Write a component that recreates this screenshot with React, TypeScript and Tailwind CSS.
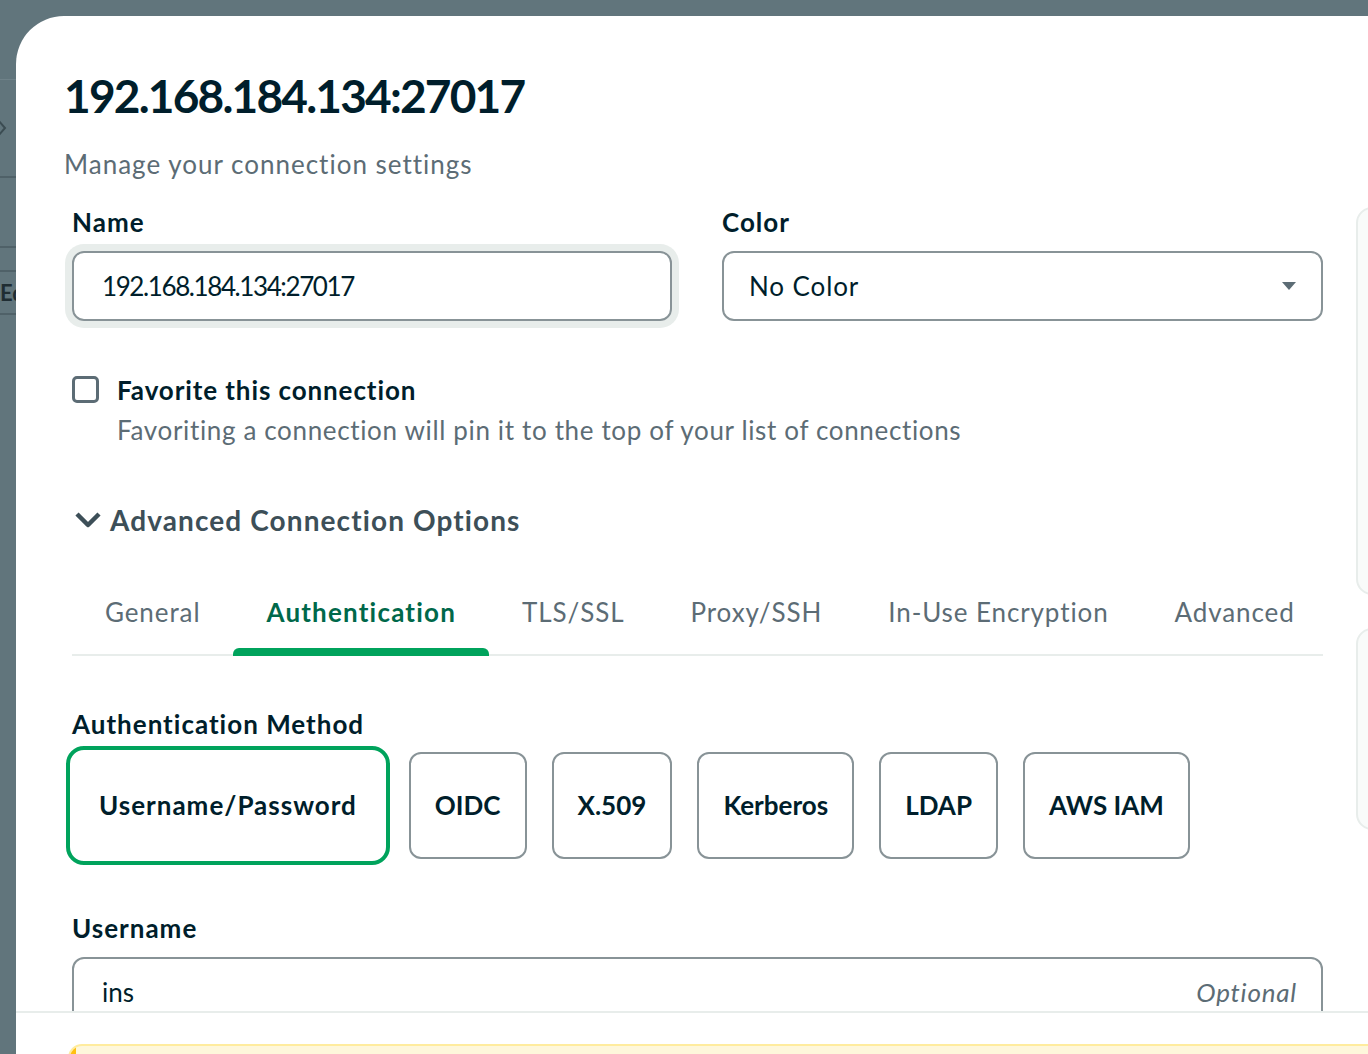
const font = { fontFamily: "Lato, 'Noto Sans', sans-serif" };

const tabs = ["General", "Authentication", "TLS/SSL", "Proxy/SSH", "In-Use Encryption", "Advanced"];
const methods = ["Username/Password", "OIDC", "X.509", "Kerberos", "LDAP", "AWS IAM"];

function LeftStrip() {
  // bits of the app behind the overlay, cut off by the modal
  return (
    <div className="w-[16px] shrink-0 flex flex-col overflow-hidden">
      <div className="h-[80px] border-b border-[#6f8289]" />
      <div className="h-[98px] border-b-2 border-[#4f6168] flex items-center">
        <svg width="8" height="16" viewBox="0 0 8 16" className="-ml-[1px]">
          <path d="M0 1l6 7-6 7" stroke="#3b4c52" strokeWidth="2" fill="none" />
        </svg>
      </div>
      <div className="h-[70px] border-b-2 border-[#4f6168]" />
      <div className="h-[24px] border-b-2 border-[#4f6168]" />
      <div className="h-[43px] border-b-2 border-[#4f6168] flex items-center">
        <span className="text-[#1f2d33] font-bold text-[22px] leading-none">Ed</span>
      </div>
    </div>
  );
}

function Label({ children }: { children: React.ReactNode }) {
  return <div className="text-[26px] leading-[32px] font-bold tracking-[1px] text-[#001e2b]">{children}</div>;
}

export default function App() {
  return (
    <div className="h-[1054px] w-[1368px] bg-[#61757c] flex overflow-hidden" style={font}>
      <LeftStrip />
      <div className="flex-1 mt-[16px] h-[1038px] bg-white rounded-tl-[48px] flex flex-col overflow-hidden">
        <div className="h-[995px] shrink-0 overflow-hidden flex">
          <div className="ml-[48px] w-[1259px] shrink-0">
            <h1 className="mt-[52px] text-[46px] leading-[56px] font-bold tracking-[-1.8px] text-[#001e2b]">
              192.168.184.134:27017
            </h1>
            <p className="mt-[22px] text-[26px] leading-[36px] tracking-[1px] text-[#5c6c75]">
              Manage your connection settings
            </p>

            <div className="ml-[8px] w-[1251px]">
              <div className="mt-[24px] flex gap-[50px]">
                <div className="w-[600px]">
                  <Label>Name</Label>
                  <div className="mt-[13px] h-[70px] rounded-[12px] border-2 border-[#889397] shadow-[0_0_0_7px_#e8edeb] flex items-center px-[28px] text-[26px] tracking-[-1.4px] text-[#001e2b]">
                    192.168.184.134:27017
                  </div>
                </div>
                <div className="w-[601px]">
                  <Label>Color</Label>
                  <div className="mt-[13px] h-[70px] rounded-[12px] border-2 border-[#889397] flex items-center justify-between pl-[25px] pr-[24px] text-[26px] tracking-[0.9px] text-[#001e2b]">
                    <span>No Color</span>
                    <svg width="16" height="10" viewBox="0 0 16 10">
                      <path d="M1 1h14L8 9z" fill="#5c6c75" />
                    </svg>
                  </div>
                </div>
              </div>

              <div className="mt-[53px] flex gap-[18px]">
                <div className="w-[27px] h-[27px] mt-[2px] rounded-[5px] border-[3px] border-[#5c6c75] shrink-0" />
                <div>
                  <div className="text-[26px] leading-[32px] font-bold tracking-[0.9px] text-[#001e2b]">
                    Favorite this connection
                  </div>
                  <div className="mt-[6px] text-[26px] leading-[36px] tracking-[0.65px] text-[#5c6c75]">
                    Favoriting a connection will pin it to the top of your list of connections
                  </div>
                </div>
              </div>

              <div className="mt-[54px] flex items-center gap-[8px] text-[#3d4f58]">
                <svg width="28" height="18" viewBox="0 0 28 18" className="ml-[2px]">
                  <path d="M3 3l11 11L25 3" stroke="#3d4f58" strokeWidth="4.5" fill="none" strokeLinejoin="round" />
                </svg>
                <span className="text-[28px] leading-[36px] font-bold tracking-[1.1px]">Advanced Connection Options</span>
              </div>

              <div className="mt-[38px] flex border-b-2 border-[#e8edeb]">
                {tabs.map((t) => {
                  const active = t === "Authentication";
                  return (
                    <div
                      key={t}
                      className={
                        active
                          ? "relative shrink-0 whitespace-nowrap px-[33px] pt-[18px] pb-[24px] text-[26px] leading-[36px] font-bold tracking-[1.2px] text-[#00684a]"
                          : "relative shrink-0 whitespace-nowrap px-[33px] pt-[18px] pb-[24px] text-[26px] leading-[36px] tracking-[0.9px] text-[#5c6c75]"
                      }
                    >
                      {t}
                      {active && (
                        <div className="absolute left-0 right-0 bottom-[-2px] h-[8px] rounded-t-[6px] bg-[#00a35c]" />
                      )}
                    </div>
                  );
                })}
              </div>

              <div className="mt-[52px]">
                <Label>Authentication Method</Label>
              </div>
              <div className="mt-[12px] flex gap-[25px]">
                {methods.map((m) => {
                  const active = m === "Username/Password";
                  return (
                    <div
                      key={m}
                      className={
                        active
                          ? "h-[107px] px-[25px] flex items-center whitespace-nowrap rounded-[12px] border-2 border-transparent outline-[4px] outline-solid outline-[#00a35c] outline-offset-[2px] text-[26px] font-bold tracking-[1px] text-[#001e2b]"
                          : "h-[107px] px-[24px] flex items-center whitespace-nowrap rounded-[12px] border-2 border-[#889397] text-[26px] font-bold text-[#001e2b]"
                      }
                    >
                      {m}
                    </div>
                  );
                })}
              </div>

              <div className="mt-[53px]">
                <Label>Username</Label>
              </div>
              <div className="mt-[13px] h-[70px] rounded-[12px] border-2 border-[#889397] flex items-center justify-between pl-[28px] pr-[24px] text-[26px]">
                <span className="text-[#001e2b]">ins</span>
                <span className="italic tracking-[0.8px] text-[#5c6c75]">Optional</span>
              </div>
            </div>
          </div>

          <div className="ml-[33px] pt-[191px] flex flex-col gap-[33px] shrink-0">
            <div className="w-[300px] h-[388px] rounded-[16px] border-2 border-[#e8edeb] bg-[#f9fbfa]" />
            <div className="w-[300px] h-[202px] rounded-[16px] border-2 border-[#e8edeb] bg-[#f9fbfa]" />
          </div>
        </div>

        <div className="flex-1 border-t-2 border-[#e8edeb] pt-[31px] pl-[52px]">
          <div className="h-[80px] w-[1400px] rounded-[14px] border-2 border-[#ffec9e] bg-[#fef7db] flex overflow-hidden">
            <div className="w-[6px] bg-[#ffc010]" />
          </div>
        </div>
      </div>
    </div>
  );
}
